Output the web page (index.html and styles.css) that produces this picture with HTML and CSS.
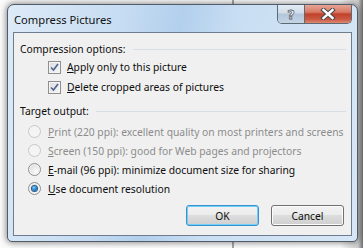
FILE: index.html
```html
<!DOCTYPE html>
<html lang="en">
<head>
  <meta charset="UTF-8" />
  <title>Compress Pictures</title>
  <link rel="stylesheet" href="styles.css">
</head>
<body>
  <div class="screen">
    <div class="window">
      <div class="titlebar">
        <span class="title">Compress Pictures</span>
        <div class="caption">
          <div class="cbtn help">?</div>
          <div class="cbtn close">
            <svg width="16" height="12" viewBox="0 0 16 12">
              <path d="M3.5 2 L12.5 10 M12.5 2 L3.5 10" stroke="#4a4a4a" stroke-width="4.4" stroke-linecap="square"/>
              <path d="M3.5 2 L12.5 10 M12.5 2 L3.5 10" stroke="#fff" stroke-width="2.4" stroke-linecap="square"/>
            </svg>
          </div>
        </div>
      </div>

      <div class="client">
        <div class="group-head"><span>Compression options:</span><div class="rule"></div></div>
        <div class="row check-row">
          <span class="check">
            <svg width="9" height="9" viewBox="0 0 9 9"><path d="M1 4.5 L3.5 7 L8 1" fill="none" stroke="#4d6390" stroke-width="1.6"/></svg>
          </span>
          <span><u>A</u>pply only to this picture</span>
        </div>
        <div class="row check-row">
          <span class="check">
            <svg width="9" height="9" viewBox="0 0 9 9"><path d="M1 4.5 L3.5 7 L8 1" fill="none" stroke="#4d6390" stroke-width="1.6"/></svg>
          </span>
          <span><u>D</u>elete cropped areas of pictures</span>
        </div>

        <div class="group-head second"><span>Target output:</span><div class="rule"></div></div>
        <div class="radios">
          <div class="row radio-row disabled"><span class="radio"></span><span><u>P</u>rint (220 ppi): excellent quality on most printers and screens</span></div>
          <div class="row radio-row disabled"><span class="radio"></span><span><u>S</u>creen (150 ppi): good for Web pages and projectors</span></div>
          <div class="row radio-row"><span class="radio"></span><span><u>E</u>-mail (96 ppi): minimize document size for sharing</span></div>
          <div class="row radio-row"><span class="radio on"></span><span><u>U</u>se document resolution</span></div>
        </div>

        <div class="actions">
          <button class="btn default">OK</button>
          <button class="btn">Cancel</button>
        </div>
      </div>
    </div>
  </div>
</body>
</html>
```

FILE: styles.css
```css
body {
  margin: 0;
  width: 363px;
  height: 248px;
  overflow: hidden;
  background:
    linear-gradient(to right, transparent 232px, #a7a7a7 232px, #a7a7a7 234px, transparent 234px),
    linear-gradient(to right, #fbfbfb 0, #ffffff 340px, #cfcfcf 358px, #6d6d6d 363px);
  font-family: "Noto Sans", "Open Sans", sans-serif;
  font-size: 10.3px;
  color: #0d0d0d;
}

.screen {
  display: flex;
  height: 248px;
}

.window {
  margin: 4px 0 0 7px;
  width: 351px;
  height: 238px;
  box-sizing: border-box;
  border: 1px solid #525c68;
  border-radius: 7px 7px 5px 5px;
  padding: 0 5px 5px;
  display: flex;
  flex-direction: column;
  background:
    linear-gradient(100deg, rgba(255,255,255,0.5) 0, rgba(255,255,255,0.15) 30%, rgba(160,195,230,0.35) 45%, rgba(255,255,255,0.2) 60%, rgba(255,255,255,0.4) 100%),
    #bcd6f0;
  box-shadow: 0 0 6px 1px rgba(0, 0, 0, 0.45);
}

.titlebar {
  height: 27px;
  flex: none;
  display: flex;
  justify-content: space-between;
  align-items: flex-start;
}

.title {
  margin: 7px 0 0 1px;
  font-size: 11.2px;
  color: #111;
}

.caption {
  display: flex;
  border: 1px solid #5d6975;
  border-top: none;
  border-radius: 0 0 5px 5px;
  overflow: hidden;
}

.cbtn {
  height: 18px;
  display: flex;
  align-items: center;
  justify-content: center;
}

.help {
  width: 26px;
  border-right: 1px solid #5d6975;
  background: linear-gradient(#e3ecf5 0, #d0dcea 45%, #b3c5d9 50%, #c4d4e5 100%);
  font-family: "DejaVu Sans", sans-serif;
  font-size: 13px;
  font-weight: bold;
  color: #fff;
  -webkit-text-stroke: 0.8px #59636e;
}

.close {
  width: 46px;
  background: linear-gradient(#e8a493 0, #d67a66 40%, #c2412a 50%, #cb5a43 80%, #de8a72 100%);
}

.client {
  flex: 1;
  border: 1px solid #6d7d8e;
  background: #f0f0f0;
  padding: 8px 5px 0 6px;
  display: flex;
  flex-direction: column;
}

.group-head {
  height: 16px;
  display: flex;
  align-items: center;
  gap: 7px;
}

.group-head.second {
  margin-top: 6px;
}

.rule {
  flex: 1;
  height: 1px;
  background: #d6dde4;
  margin-top: 1px;
}

.row {
  display: flex;
  align-items: center;
  white-space: nowrap;
}

.check-row {
  height: 20px;
  padding-left: 28px;
  gap: 6px;
}

.check-row:first-of-type {
  margin-top: 1px;
}

.check {
  width: 13px;
  height: 13px;
  box-sizing: border-box;
  border: 1px solid #8f8f8f;
  background: linear-gradient(135deg, #dcdcdc 0, #f7f7f7 100%);
  box-shadow: inset 0 0 0 1px #f4f4f4;
  display: flex;
  align-items: center;
  justify-content: center;
}

.radios {
  margin-top: 3px;
}

.radio-row {
  height: 19px;
  padding-left: 8px;
  gap: 7px;
}

.radio {
  width: 13px;
  height: 13px;
  box-sizing: border-box;
  border-radius: 50%;
  border: 1px solid #8f8f8f;
  background: radial-gradient(circle at 65% 70%, #fbfbfb 0, #e4e4e4 60%, #cfcfcf 100%);
  box-shadow: inset 0 0 0 1px #f6f6f6;
  display: flex;
  align-items: center;
  justify-content: center;
}

.radio.on::after {
  content: "";
  width: 5px;
  height: 5px;
  border-radius: 50%;
  background: radial-gradient(circle at 40% 35%, #8fd4ff 0, #1a7fd0 50%, #0b4a8e 100%);
  box-shadow: 0 0 0 1px #2a5a8a;
}

.disabled {
  color: #8c8c8c;
}

.disabled .radio {
  border-color: #c8c8c8;
  background: #f4f4f4;
  box-shadow: none;
}

.actions {
  margin-top: 7px;
  padding-right: 2px;
  display: flex;
  justify-content: flex-end;
  gap: 12px;
}

.btn {
  width: 73px;
  height: 21px;
  border: 1px solid #707070;
  border-radius: 3px;
  background: linear-gradient(#f2f2f2 0, #ebebeb 50%, #dddddd 50%, #cfcfcf 100%);
  box-shadow: inset 0 0 0 1px #fcfcfc;
  font-family: "Noto Sans", "Open Sans", sans-serif;
  font-size: 10.3px;
  color: #0d0d0d;
  padding: 0;
}

.btn.default {
  border-color: #3c8fd0;
  box-shadow: inset 0 0 0 1px #6fd0f5;
}
```
